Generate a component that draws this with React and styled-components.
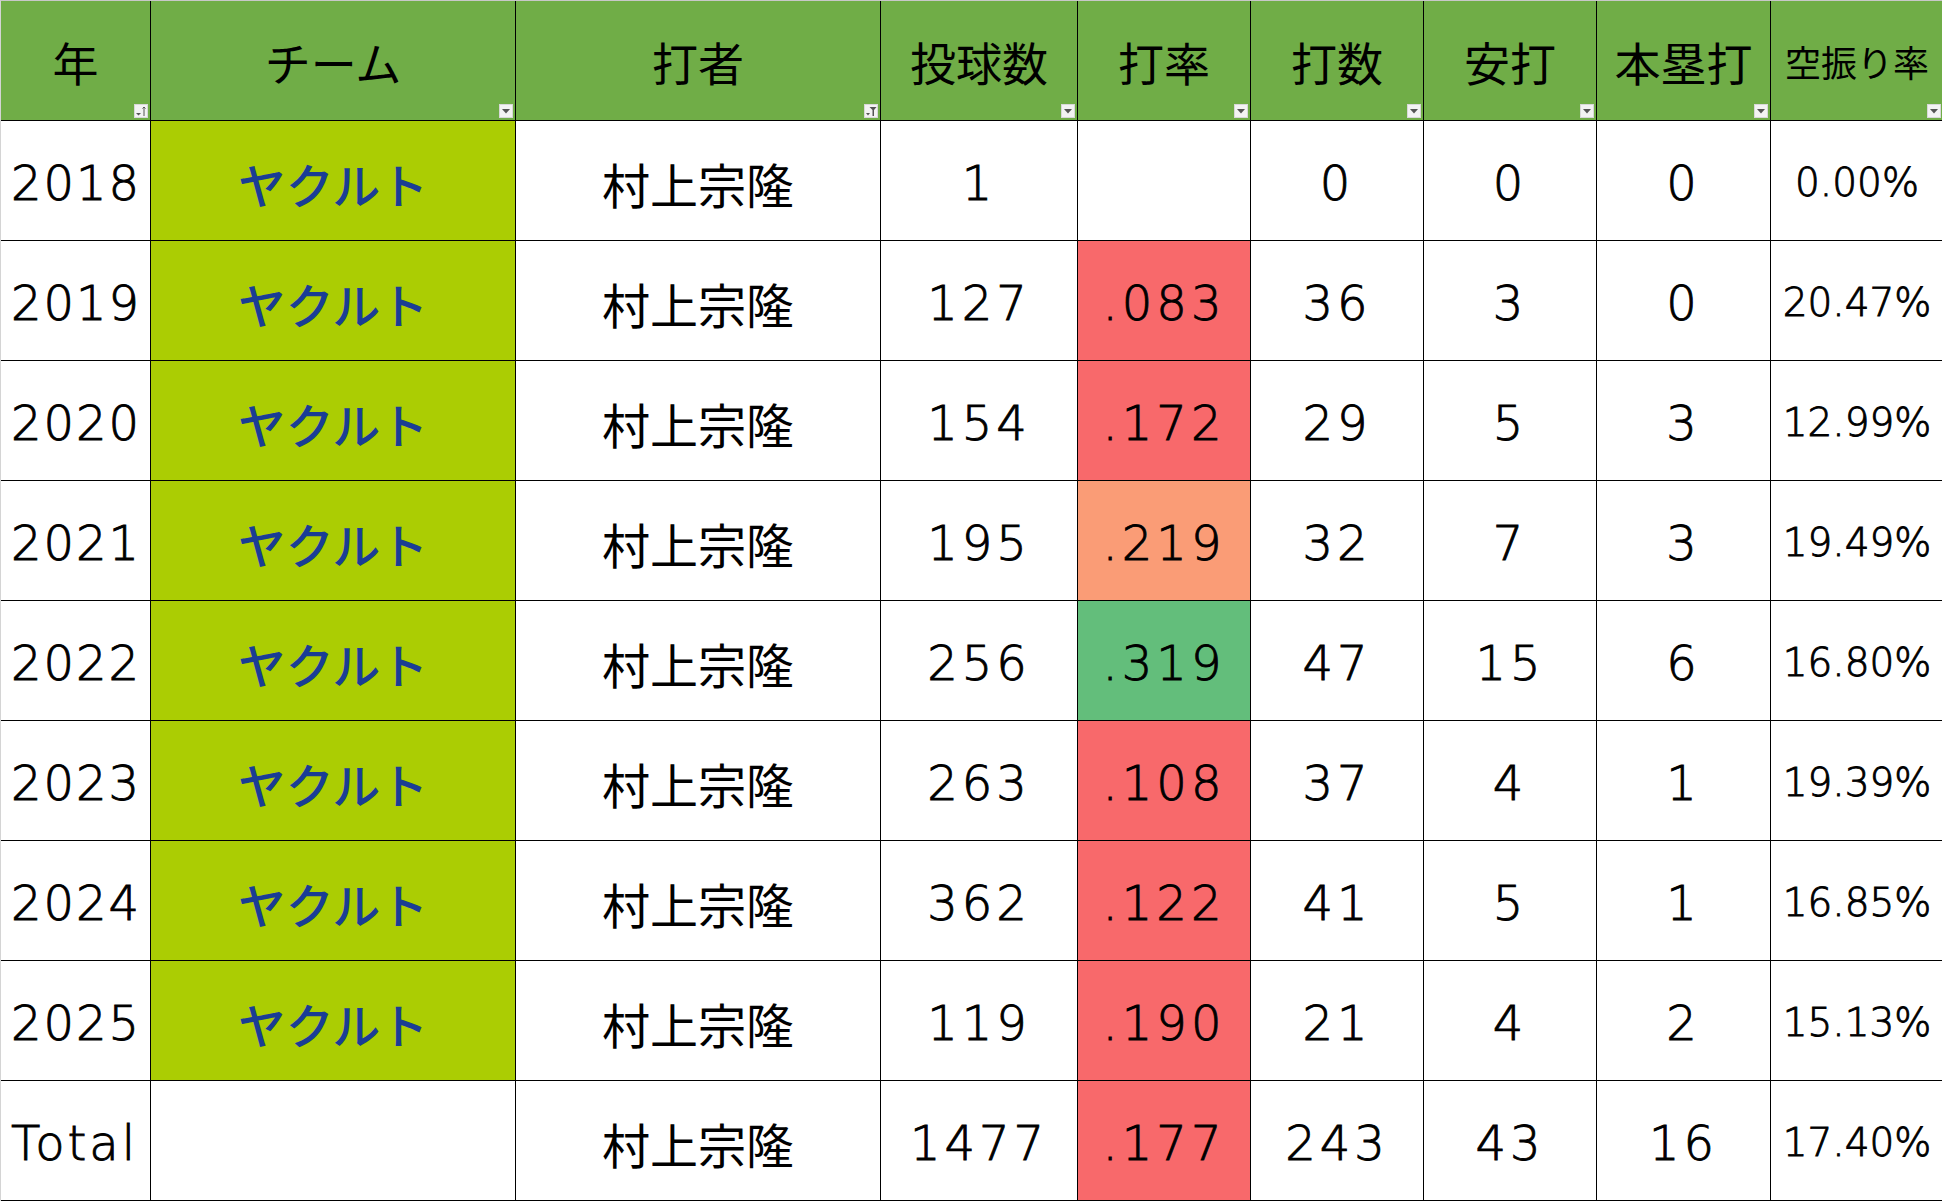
import { styled, createGlobalStyle } from 'styled-components';

const GlobalStyle = createGlobalStyle`
    body {
        margin: 0;
        background: #fff;
    }
`;

const JP = `"Noto Sans CJK JP", "Noto Sans", sans-serif`;
const NUM = `"DejaVu Sans", "Noto Sans CJK JP", sans-serif`;

const Sheet = styled.div`
    display: grid;
    grid-template-columns: 150px 365px 365px 197px 173px 173px 173px 174px 172px;
    grid-auto-rows: 120px;
    width: 1942px;
    border-top: 1px solid #c8c8c8;
    border-left: 1px solid #d4d4d4;
    box-sizing: border-box;
`;

const Row = styled.div`
    display: contents;
`;

const Cell = styled.div`
    position: relative;
    box-sizing: border-box;
    display: flex;
    align-items: center;
    justify-content: ${(p) => (p.$left ? 'flex-start' : 'center')};
    padding: 4px 0 0 ${(p) => (p.$left ? '10px' : '0')};
    border-right: ${(p) => (p.$last ? 'none' : '1px solid #000')};
    border-bottom: 1px solid #000;
    background: ${(p) => p.$bg || '#fff'};
    color: ${(p) => p.$color || '#000'};
    font-family: ${(p) => (p.$jp ? JP : NUM)};
    font-size: ${(p) => p.$size || 48}px;
    font-weight: ${(p) => p.$weight || (p.$jp ? 400 : 300)};
    -webkit-text-stroke: ${(p) => (p.$jp ? '0' : '0.9px #000')};
    line-height: 1;
    white-space: nowrap;
    letter-spacing: ${(p) => (p.$jp ? 0 : p.$spacing ?? 4)}px;
`;

const HeaderCell = styled(Cell)`
    background: #70ad47;
    font-family: ${JP};
    font-size: ${(p) => p.$size || 46}px;
    font-weight: 400;
    letter-spacing: 0;
    -webkit-text-stroke: 0;
    padding-top: 0;
`;

const FilterButton = styled.span`
    position: absolute;
    right: 2px;
    bottom: 2px;
    width: 14px;
    height: 14px;
    background: #f3f3f3;
    border: 1px solid #d8d8d8;
    box-sizing: border-box;
    display: flex;
    align-items: center;
    justify-content: center;
    svg {
        display: block;
    }
`;

function Arrow() {
    return (
        <svg width="8" height="5" viewBox="0 0 8 5">
            <path d="M0 0h8L4 4.5z" fill="#555" />
        </svg>
    );
}

function SortIcon() {
    return (
        <svg width="12" height="12" viewBox="0 0 12 12">
            <path d="M1 8h5L3.5 10.5z" fill="#555" />
            <path d="M9 2v9M7.5 3.5L9 2l1.5 1.5" stroke="#555" strokeWidth="1" fill="none" />
        </svg>
    );
}

function FunnelIcon() {
    return (
        <svg width="12" height="12" viewBox="0 0 12 12">
            <path d="M1 8h4L3 10.5z" fill="#555" />
            <path d="M4.5 2h7L9 5v6H7.5V5z" fill="#555" />
        </svg>
    );
}

const headers = [
    { label: '年', icon: 'sort' },
    { label: 'チーム' },
    { label: '打者', icon: 'filter' },
    { label: '投球数' },
    { label: '打率' },
    { label: '打数' },
    { label: '安打' },
    { label: '本塁打' },
    { label: '空振り率', size: 36 },
];

const RED = '#f8696b';
const ORANGE = '#fa9c76';
const GREEN = '#63be7b';

const rows = [
    ['2018', '1', '', null, '0', '0', '0', '0.00%'],
    ['2019', '127', '.083', RED, '36', '3', '0', '20.47%'],
    ['2020', '154', '.172', RED, '29', '5', '3', '12.99%'],
    ['2021', '195', '.219', ORANGE, '32', '7', '3', '19.49%'],
    ['2022', '256', '.319', GREEN, '47', '15', '6', '16.80%'],
    ['2023', '263', '.108', RED, '37', '4', '1', '19.39%'],
    ['2024', '362', '.122', RED, '41', '5', '1', '16.85%'],
    ['2025', '119', '.190', RED, '21', '4', '2', '15.13%'],
];

export default function App() {
    return (
        <>
            <GlobalStyle />
            <Sheet>
                {headers.map((h, i) => (
                    <HeaderCell key={h.label} $size={h.size} $last={i === 8}>
                        {h.label}
                        <FilterButton>
                            {h.icon === 'sort' ? (
                                <SortIcon />
                            ) : h.icon === 'filter' ? (
                                <FunnelIcon />
                            ) : (
                                <Arrow />
                            )}
                        </FilterButton>
                    </HeaderCell>
                ))}

                {rows.map(([year, pitches, avg, avgBg, ab, hits, hr, whiff]) => (
                    <Row key={year}>
                        <Cell $left $spacing={2}>
                            {year}
                        </Cell>
                        <Cell $jp $weight={500} $bg="#abcd03" $color="#1a3d95">
                            ヤクルト
                        </Cell>
                        <Cell $jp>村上宗隆</Cell>
                        <Cell>{pitches}</Cell>
                        <Cell $bg={avgBg}>{avg}</Cell>
                        <Cell>{ab}</Cell>
                        <Cell>{hits}</Cell>
                        <Cell>{hr}</Cell>
                        <Cell $last $size={39} $spacing={0}>
                            {whiff}
                        </Cell>
                    </Row>
                ))}

                <Cell $left $spacing={3}>
                    Total
                </Cell>
                <Cell />
                <Cell $jp>村上宗隆</Cell>
                <Cell>1477</Cell>
                <Cell $bg={RED}>.177</Cell>
                <Cell>243</Cell>
                <Cell>43</Cell>
                <Cell>16</Cell>
                <Cell $last $size={39} $spacing={0}>
                    17.40%
                </Cell>
            </Sheet>
        </>
    );
}
